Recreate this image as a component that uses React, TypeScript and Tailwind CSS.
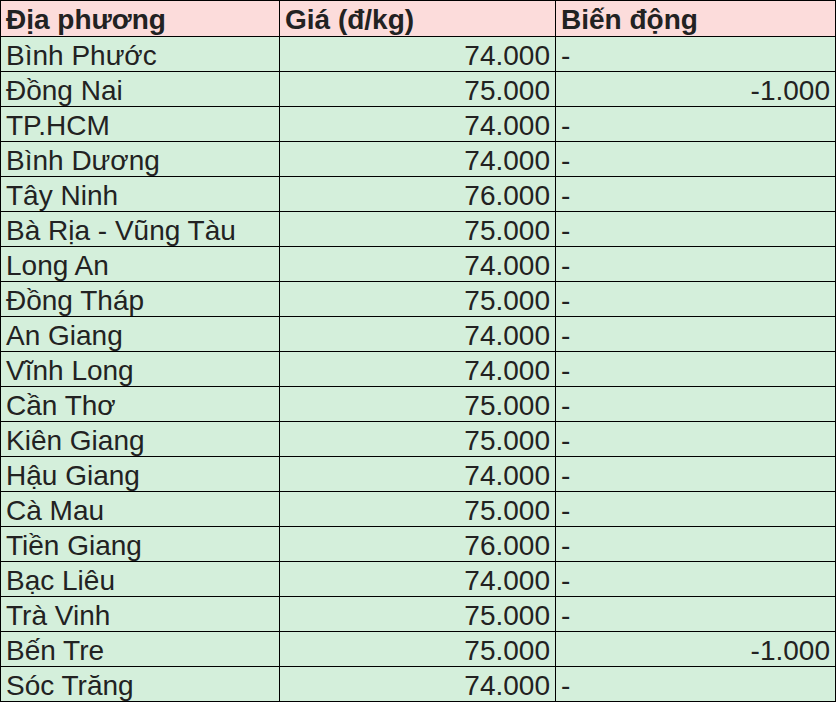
import React from "react";

const rows: [string, string, string][] = [
  ["Bình Phước", "74.000", "-"],
  ["Đồng Nai", "75.000", "-1.000"],
  ["TP.HCM", "74.000", "-"],
  ["Bình Dương", "74.000", "-"],
  ["Tây Ninh", "76.000", "-"],
  ["Bà Rịa - Vũng Tàu", "75.000", "-"],
  ["Long An", "74.000", "-"],
  ["Đồng Tháp", "75.000", "-"],
  ["An Giang", "74.000", "-"],
  ["Vĩnh Long", "74.000", "-"],
  ["Cần Thơ", "75.000", "-"],
  ["Kiên Giang", "75.000", "-"],
  ["Hậu Giang", "74.000", "-"],
  ["Cà Mau", "75.000", "-"],
  ["Tiền Giang", "76.000", "-"],
  ["Bạc Liêu", "74.000", "-"],
  ["Trà Vinh", "75.000", "-"],
  ["Bến Tre", "75.000", "-1.000"],
  ["Sóc Trăng", "74.000", "-"],
];

const cell = "border border-black px-[5px] pt-[3px] pb-0";

export default function App() {
  return (
    <div className="w-[837px] h-[703px] bg-white">
      <table
        className="table-fixed w-[835px] border-collapse text-[#222] text-[28px] leading-none"
        style={{ fontFamily: '"Liberation Sans", Arial, sans-serif' }}
      >
        <colgroup>
          <col className="w-[279px]" />
          <col className="w-[276px]" />
          <col className="w-[280px]" />
        </colgroup>
        <thead>
          <tr className="h-[36px] bg-[#fcdcdb]">
            <th className={`${cell} text-left font-bold`}>Địa phương</th>
            <th className={`${cell} text-left font-bold`}>Giá (đ/kg)</th>
            <th className={`${cell} text-left font-bold`}>Biến động</th>
          </tr>
        </thead>
        <tbody>
          {rows.map(([place, price, change]) => (
            <tr key={place} className="h-[35px] bg-[#d4efdb]">
              <td className={`${cell} text-left`}>{place}</td>
              <td className={`${cell} text-right`}>{price}</td>
              <td className={change === "-" ? `${cell} text-left` : `${cell} text-right`}>
                {change}
              </td>
            </tr>
          ))}
        </tbody>
      </table>
    </div>
  );
}
